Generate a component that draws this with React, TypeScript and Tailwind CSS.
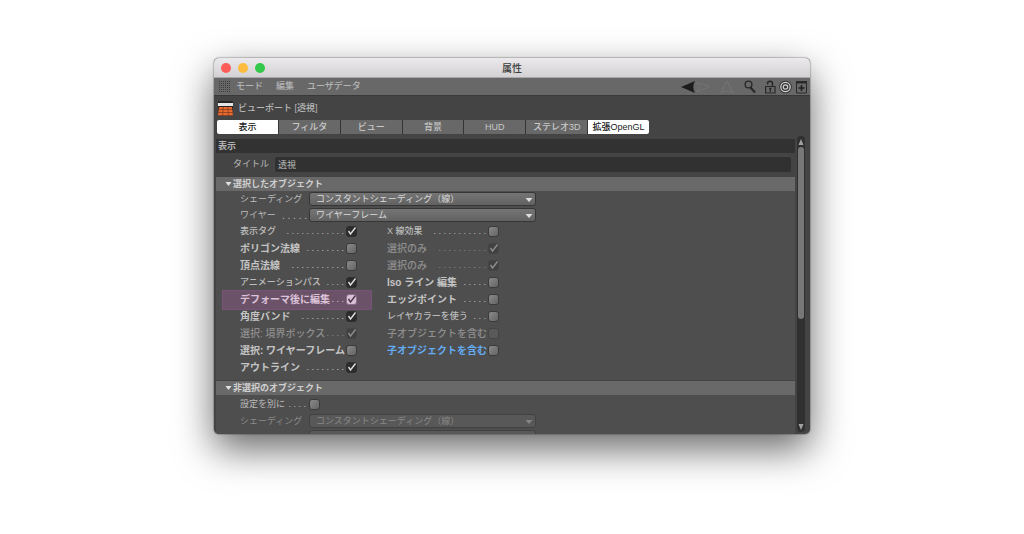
import React from 'react';

type Option = { label: string; dots: number; checked?: boolean; tone?: string; marked?: boolean };

const tabs = ['表示', 'フィルタ', 'ビュー', '背景', 'HUD', 'ステレオ3D', '拡張OpenGL'];
const activeTabs = ['表示', '拡張OpenGL'];

const NORMAL = 'text-[9px] text-[#bcbcbc] font-medium';
const STRONG = 'text-[10px] text-[#c4c4c4] font-bold';
const DIM = 'text-[10px] text-[#8f8f8f] font-medium';
const BLUE = 'text-[10px] text-[#63abf2] font-bold';
const PINK = 'text-[10px] text-[#dcc3d9] font-bold';

const leftOptions: Option[] = [
  { label: '表示タグ', dots: 12, checked: true },
  { label: 'ポリゴン法線', dots: 8, tone: STRONG },
  { label: '頂点法線', dots: 11, tone: STRONG },
  { label: 'アニメーションパス', dots: 4, checked: true },
  { label: 'デフォーマ後に編集', dots: 3, checked: true, tone: PINK, marked: true },
  { label: '角度バンド', dots: 9, checked: true, tone: STRONG },
  { label: '選択: 境界ボックス', dots: 4, checked: true, tone: DIM },
  { label: '選択: ワイヤーフレーム', dots: 0, tone: STRONG },
  { label: 'アウトライン', dots: 8, checked: true, tone: STRONG },
];

const rightOptions: Option[] = [
  { label: 'X 線効果', dots: 11 },
  { label: '選択のみ', dots: 10, checked: true, tone: DIM },
  { label: '選択のみ', dots: 10, checked: true, tone: DIM },
  { label: 'Iso ライン 編集', dots: 5, tone: STRONG },
  { label: 'エッジポイント', dots: 5, tone: STRONG },
  { label: 'レイヤカラーを使う', dots: 3 },
  { label: '子オブジェクトを含む', dots: 0, tone: DIM },
  { label: '子オブジェクトを含む', dots: 0, tone: BLUE },
];

function Dots({ count }: { count: number }) {
  return <span aria-hidden="true">{'. '.repeat(count).trim()}</span>;
}

function CheckBox({ id, checked, dim, marked }: { id: string; checked?: boolean; dim?: boolean; marked?: boolean }) {
  const box = marked
    ? 'border-[#8a6d86] bg-[#d9c0d6]'
    : checked
      ? dim ? 'border-[#454545] bg-[#414141]' : 'border-[#2e2e2e] bg-[#2b2b2b]'
      : dim ? 'border-[#454545] bg-[#595959]' : 'border-[#3a3a3a] bg-linear-to-br from-[#8a8a8a] to-[#646464]';
  return (
    <span className="relative flex h-[11px] w-[11px] shrink-0">
      <input id={id} type="checkbox" defaultChecked={checked} disabled={dim} className={`h-[11px] w-[11px] appearance-none rounded-[3px] border ${box}`} />
      {checked && (
        <svg viewBox="0 0 11 11" className="pointer-events-none absolute inset-0" fill="none" stroke={marked ? '#49334a' : dim ? '#8d8d8d' : '#dedede'} strokeWidth="1.4">
          <path d="M2.5 5 L4.5 8 L9.5 1.500" />
        </svg>
      )}
    </span>
  );
}

function OptionRow({ option, id, width }: { option: Option; id: string; width: string }) {
  const tone = option.tone ?? NORMAL;
  return (
    <div className="relative flex h-[17px] items-center">
      {option.marked && <div className="absolute -top-px -left-[18px] h-[20px] w-[150px] border border-[#76547a] bg-[#6b5268]" />}
      <div className={`relative flex items-center justify-between whitespace-nowrap ${width} ${tone}`}>
        <label htmlFor={id}>{option.label}</label>
        {option.dots > 0 && <span className="text-[9px] font-normal"><Dots count={option.dots} /></span>}
      </div>
      <CheckBox id={id} checked={option.checked} dim={tone === DIM} marked={option.marked} />
    </div>
  );
}

function SelectRow({ id, label, value, dots = 0, dim }: { id: string; label?: string; value?: string; dots?: number; dim?: boolean }) {
  return (
    <div className={`flex h-4 shrink-0 items-center pl-6 ${dim ? 'text-[#8a8a8a]' : 'text-[#bcbcbc]'}`}>
      <div className="flex w-[69px] items-center justify-between pr-[2px] whitespace-nowrap">
        {label && <label htmlFor={id}>{label}</label>}
        {dots > 0 && <span className="text-[10px] font-normal"><Dots count={dots} /></span>}
      </div>
      <div className="relative w-[227px]">
        <select
          id={id}
          disabled={dim}
          aria-label={label ? undefined : 'ワイヤー'}
          className={`block h-[14px] w-full appearance-none rounded-[3px] border pl-[6px] text-[9px] leading-[12px] ${
            dim ? 'border-[#424242] bg-[#585858] text-[#898989] opacity-100' : 'border-[#363636] bg-linear-to-b from-[#757575] to-[#626262] text-[#dcdcdc]'
          }`}
        >
          {value && <option>{value}</option>}
        </select>
        {value && (
          <svg viewBox="0 0 8 4" className={`pointer-events-none absolute top-[6px] right-[3px] h-1 w-2 ${dim ? 'fill-[#858585]' : 'fill-[#dddddd]'}`}>
            <path d="M.5 0h7L4 4z" />
          </svg>
        )}
      </div>
    </div>
  );
}

function GroupHeader({ children }: { children: React.ReactNode }) {
  return (
    <button className="flex h-[15px] w-full shrink-0 items-center gap-px border-t border-[#434343] bg-[#696969] pl-[9px] text-left font-bold text-[#d0d0d0]">
      <svg viewBox="0 0 7 4" className="h-1 w-[7px] fill-[#e2e2e2]">
        <path d="M.5 0h6L3.500 4z" />
      </svg>
      {children}
    </button>
  );
}

function TitleBar() {
  return (
    <div className="flex h-5 shrink-0 items-center border-b border-[#a9a7a9] bg-linear-to-b from-[#ebe9eb] to-[#d3d1d3] px-[7px]">
      <div className="flex flex-1 gap-[7px]">
        <button aria-label="閉じる" className="h-[10px] w-[10px] rounded-full bg-[#fc5b57]" />
        <button aria-label="しまう" className="h-[10px] w-[10px] rounded-full bg-[#fdbc40]" />
        <button aria-label="拡大" className="h-[10px] w-[10px] rounded-full bg-[#34c84a]" />
      </div>
      <h1 className="pt-px text-[10px] font-medium text-[#3c3c3c]">属性</h1>
      <div className="flex-1" />
    </div>
  );
}

function MenuBar() {
  return (
    <div className="flex h-[18px] shrink-0 items-center border-b border-[#383838] bg-[#686868] pr-[3px] pl-[5px]">
      <svg viewBox="0 0 11 11" className="mr-[6px] h-[11px] w-[11px]" stroke="#3c3c3c" strokeDasharray="1 1">
        <path d="M0 .5h11M0 2.500h11M0 4.500h11M0 6.500h11M0 8.500h11M0 10.500h11" />
      </svg>
      <nav className="flex flex-1 gap-[13px] font-medium text-[#b4b4b4]">
        <button>モード</button>
        <button>編集</button>
        <button>ユーザデータ</button>
      </nav>
      <svg viewBox="0 0 126 14" className="h-[14px] w-[126px]" fill="none">
        <path d="M15 2.500 L29 6.500 L15 12 L19 7.500Z" stroke="#747474" />
        <path d="M0 7 L14 1 Q10.500 7 14 13Z" fill="#1c1c1c" />
        <path d="M46 1 L52 13 L46 10.500 L40 13Z" stroke="#747474" />
        <circle cx="67.500" cy="4.500" r="3.400" stroke="#292929" strokeWidth="1.400" />
        <path d="M69.500 7.500 L74 12.500" stroke="#292929" strokeWidth="2.200" />
        <path d="M86.500 4.500 V3.500 Q86.500 1.200 89 1.200 Q91.500 1.200 91.500 3.500 V6" stroke="#292929" strokeWidth="1.500" />
        <path d="M84.600 6.500h9.400v6.500h-9.400z" stroke="#292929" strokeWidth="1.200" />
        <path d="M88 8.500h2.500M89.300 8.500v3.500" stroke="#292929" strokeWidth="1.300" />
        <circle cx="104.500" cy="7" r="6.300" fill="#333333" />
        <circle cx="104.500" cy="7" r="4.700" stroke="#d2d2d2" strokeWidth="1.300" />
        <circle cx="104.500" cy="7" r="2.200" stroke="#d2d2d2" strokeWidth="1.200" />
        <path d="M115.500 1.500h10v11.500h-10z" stroke="#292929" />
        <path d="M115 2.200h11" stroke="#292929" strokeWidth="2.400" />
        <path d="M120.500 5v6M117.500 8h6" stroke="#1f1f1f" strokeWidth="1.600" />
      </svg>
    </div>
  );
}

function ScrollBar() {
  return (
    <div className="mb-[2px] flex w-2 flex-col items-center rounded-full bg-[#303030]">
      <svg viewBox="0 0 8 11" className="h-[11px] w-2 shrink-0 fill-[#a0a0a0]">
        <path d="M4 3 L6.500 9h-5z" />
      </svg>
      <div className="h-[172px] w-[6px] rounded-full bg-[#777777]" />
      <div className="flex-1" />
      <svg viewBox="0 0 8 8" className="h-2 w-2 shrink-0 fill-[#a0a0a0]">
        <path d="M1.500 0h5L4 6z" />
      </svg>
    </div>
  );
}

export default function App() {
  return (
    <main className="min-h-screen overflow-hidden bg-white pt-[58px] font-['Liberation_Sans','Noto_Sans_CJK_JP',sans-serif] text-[9px] leading-[13px]">
      <section className="mx-auto flex h-[376px] w-full max-w-[596px] flex-col overflow-hidden rounded-[5px] bg-[#444444] shadow-[0_15px_38px_0_rgba(0,0,0,0.6),0_0_1px_1px_rgba(0,0,0,0.2)]">
        <TitleBar />
        <MenuBar />
        <div className="flex h-6 shrink-0 items-center gap-[5px] pl-1 font-medium text-[#b8b8b8]">
          <svg viewBox="0 0 15 15" className="h-[15px] w-[15px]">
            <path d="M0 1q0-1 1-1h13q1 0 1 1v14H0z" fill="#252525" />
            <path d="M0 2h15v3H0z" fill="#e4e4e4" />
            <path d="M1 6h13l1 8.500H0z" fill="#e8692f" />
            <path d="M0 8.500h15M0 11.500h15M5.300 6 L4.500 15M9.700 6l.8 9" stroke="#6b3218" strokeWidth=".6" />
          </svg>
          <h2>ビューポート [透視]</h2>
        </div>
        <div role="tablist" className="ml-[3px] flex h-[14px] w-[432px] shrink-0 gap-px overflow-hidden rounded-[2px] bg-[#353535]">
          {tabs.map((tab) => {
            const active = activeTabs.includes(tab);
            return (
              <button key={tab} role="tab" aria-selected={active} className={`flex-1 basis-0 font-medium whitespace-nowrap ${active ? 'bg-white text-[#202020]' : 'bg-[#686868] text-[#c8c8c8]'}`}>
                {tab}
              </button>
            );
          })}
        </div>
        <div className="mt-[2px] flex min-h-0 flex-1 gap-[2px] pr-[5px] pl-[2px]">
          <div className="flex min-w-0 flex-1 flex-col overflow-hidden">
            <h3 className="mt-[3px] flex h-[14px] shrink-0 items-center bg-[#323232] pt-px pl-[2px] font-bold text-[#b4b4b4]">表示</h3>
            <div className="my-1 flex h-[15px] shrink-0 items-center gap-1 pr-1 pl-[17px] text-[#bcbcbc]">
              <label htmlFor="title" className="w-[38px] whitespace-nowrap">タイトル</label>
              <input id="title" defaultValue="透視" className="h-[15px] min-w-0 flex-1 rounded-[2px] bg-[#313131] px-[3px] text-[9px] text-[#bcbcbc]" />
            </div>
            <GroupHeader>選択したオブジェクト</GroupHeader>
            <div className="shrink-0 bg-[#4e4e4e] pb-1">
              <SelectRow id="shading" label="シェーディング" value="コンスタントシェーディング（線）" />
              <SelectRow id="wire" label="ワイヤー" value="ワイヤーフレーム" dots={5} />
              <div className="flex pl-6">
                <div className="w-[147px]">
                  {leftOptions.map((option, i) => (
                    <OptionRow key={i} id={`left-${i}`} option={option} width="w-[106px] pr-[2px]" />
                  ))}
                </div>
                <div>
                  {rightOptions.map((option, i) => (
                    <OptionRow key={i} id={`right-${i}`} option={option} width="w-[101px] pr-[2px]" />
                  ))}
                </div>
              </div>
            </div>
            <GroupHeader>非選択のオブジェクト</GroupHeader>
            <div className="flex-1 bg-[#4e4e4e]">
              <div className="flex h-[18px] items-center pl-6 text-[#bcbcbc]">
                <div className="flex w-[69px] justify-between pr-[3px]">
                  <label htmlFor="separate">設定を別に</label>
                  <span><Dots count={4} /></span>
                </div>
                <CheckBox id="separate" />
              </div>
              <SelectRow id="shading-off" label="シェーディング" value="コンスタントシェーディング（線）" dim />
              <SelectRow id="wire-off" dim />
            </div>
          </div>
          <ScrollBar />
        </div>
      </section>
    </main>
  );
}
